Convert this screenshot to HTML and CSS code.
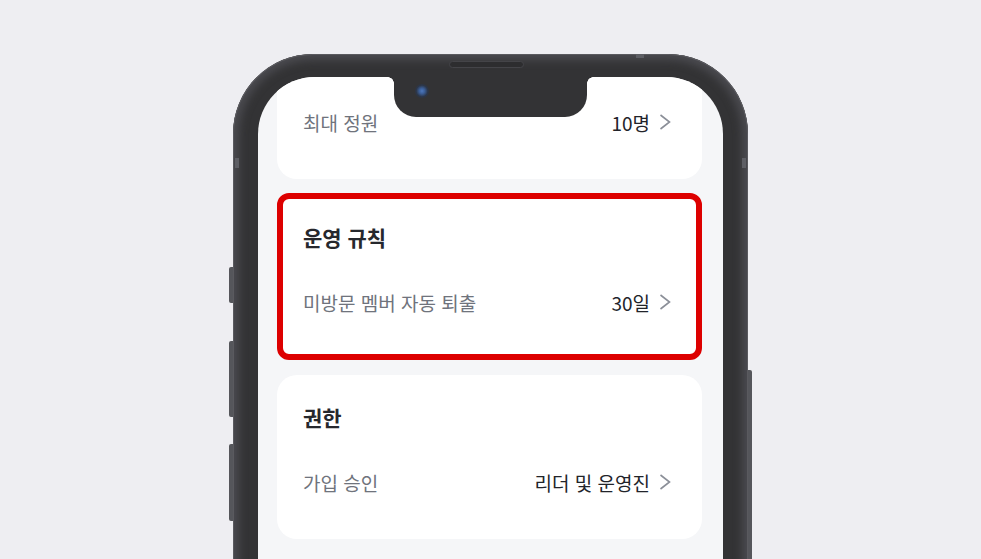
FILE: index.html
```html
<!DOCTYPE html>
<html lang="ko">
<head>
    <meta charset="UTF-8">
    <meta name="viewport" content="width=device-width, initial-scale=1.0">
    <title>모임 설정</title>
    <link rel="stylesheet" href="styles.css">
</head>
<body>
    <div class="phone">
        <span class="side-btn btn-action"></span>
        <span class="side-btn btn-vol-up"></span>
        <span class="side-btn btn-vol-down"></span>
        <span class="side-btn btn-power"></span>
        <span class="band band-left"></span>
        <span class="band band-right"></span>
        <span class="band band-top"></span>
        <span class="speaker"></span>

        <div class="screen">
            <div class="notch"><span class="camera"></span></div>

            <div class="content">
                <div class="card card-tail">
                    <div class="row">
                        <span class="label">최대 정원</span>
                        <span class="value">10명
                            <svg class="chev" viewBox="0 0 20 20"><path d="M5.5 3 L14.5 10 L5.5 17"/></svg>
                        </span>
                    </div>
                </div>

                <div class="card marked">
                    <h3 class="card-title">운영 규칙</h3>
                    <div class="row">
                        <span class="label">미방문 멤버 자동 퇴출</span>
                        <span class="value">30일
                            <svg class="chev" viewBox="0 0 20 20"><path d="M5.5 3 L14.5 10 L5.5 17"/></svg>
                        </span>
                    </div>
                </div>

                <div class="card">
                    <h3 class="card-title">권한</h3>
                    <div class="row">
                        <span class="label">가입 승인</span>
                        <span class="value">리더 및 운영진
                            <svg class="chev" viewBox="0 0 20 20"><path d="M5.5 3 L14.5 10 L5.5 17"/></svg>
                        </span>
                    </div>
                </div>
            </div>
        </div>
    </div>
</body>
</html>
```

FILE: styles.css
```css
* {
    box-sizing: border-box;
}
body {
    margin: 0;
    height: 559px;
    overflow: hidden;
    background: #eeeef2;
    font-family: "Noto Sans CJK KR", "Noto Sans", sans-serif;
    padding-top: 54px;
}
.phone {
    position: relative;
    width: 515px;
    height: 560px;
    margin: 0 auto;
    padding: 23px 25px 0 25px;
    background: #333335;
    border-radius: 80px 80px 0 0;
    box-shadow: inset 0 0 0 1px #5a5a5f, inset 0 0 8px 6px #4b4b50;
}
.side-btn {
    position: absolute;
    width: 4px;
    background: #55565b;
}
.btn-action, .btn-vol-up, .btn-vol-down {
    left: -4px;
    border-radius: 2px 0 0 2px;
}
.btn-action { top: 213px; height: 36px; }
.btn-vol-up { top: 287px; height: 76px; }
.btn-vol-down { top: 390px; height: 77px; }
.btn-power {
    right: -4px;
    top: 316px;
    height: 300px;
    border-radius: 0 2px 2px 0;
}
.band {
    position: absolute;
    background: #5d5e64;
}
.band-left { left: 2px; top: 104px; width: 4px; height: 10px; }
.band-right { right: 2px; top: 104px; width: 4px; height: 10px; }
.band-top { left: 403px; top: 0; width: 8px; height: 4px; }
.speaker {
    position: absolute;
    left: 216px;
    top: 7px;
    width: 75px;
    height: 7px;
    border-radius: 4px;
    background: #2d2d2f;
    border: 1px solid #444448;
}
.screen {
    position: relative;
    height: 100%;
    background: #f5f6f8;
    border-radius: 57px 57px 0 0;
    overflow: hidden;
}
.notch {
    position: absolute;
    z-index: 2;
    top: 0;
    left: 136px;
    width: 193px;
    height: 40px;
    background: #333335;
    border-radius: 0 0 22px 22px;
}
.notch::before,
.notch::after {
    content: "";
    position: absolute;
    top: 0;
    width: 6px;
    height: 6px;
}
.notch::before {
    left: -6px;
    background: radial-gradient(circle at 0 100%, transparent 5.5px, #333335 6px);
}
.notch::after {
    right: -6px;
    background: radial-gradient(circle at 100% 100%, transparent 5.5px, #333335 6px);
}
.camera {
    position: absolute;
    left: 21px;
    top: 7px;
    width: 14px;
    height: 14px;
    border-radius: 50%;
    background: radial-gradient(circle, #4d78bd 0, #3a5d96 28%, #2c3648 58%, #303238 100%);
}
.content {
    display: flex;
    flex-direction: column;
    gap: 16px;
    margin-top: -62px;
    padding: 0 21px 0 19px;
}
.card {
    position: relative;
    height: 164px;
    background: #fff;
    border-radius: 20px;
    padding: 28px 27px 0 26px;
}
.card-tail {
    padding-top: 93px;
}
.card-tail .row {
    margin-top: 0;
}
.card.marked {
    border-radius: 12px;
}
.card.marked::after {
    content: "";
    position: absolute;
    top: -2px;
    left: 0;
    right: 0;
    bottom: -1px;
    border: 6px solid #dd0000;
    border-radius: 12px;
}
.card-title {
    margin: 0;
    font-size: 21px;
    line-height: 28px;
    font-weight: 700;
    color: #26282d;
}
.row {
    display: flex;
    justify-content: space-between;
    align-items: center;
    height: 28px;
    margin-top: 37px;
}
.label {
    font-size: 19px;
    color: #6f737c;
}
.value {
    display: flex;
    align-items: center;
    gap: 5px;
    font-size: 19px;
    font-weight: 400;
    color: #22242a;
}
.chev {
    width: 20px;
    height: 20px;
    fill: none;
    stroke: #8b8f98;
    stroke-width: 1.6;
}
```
